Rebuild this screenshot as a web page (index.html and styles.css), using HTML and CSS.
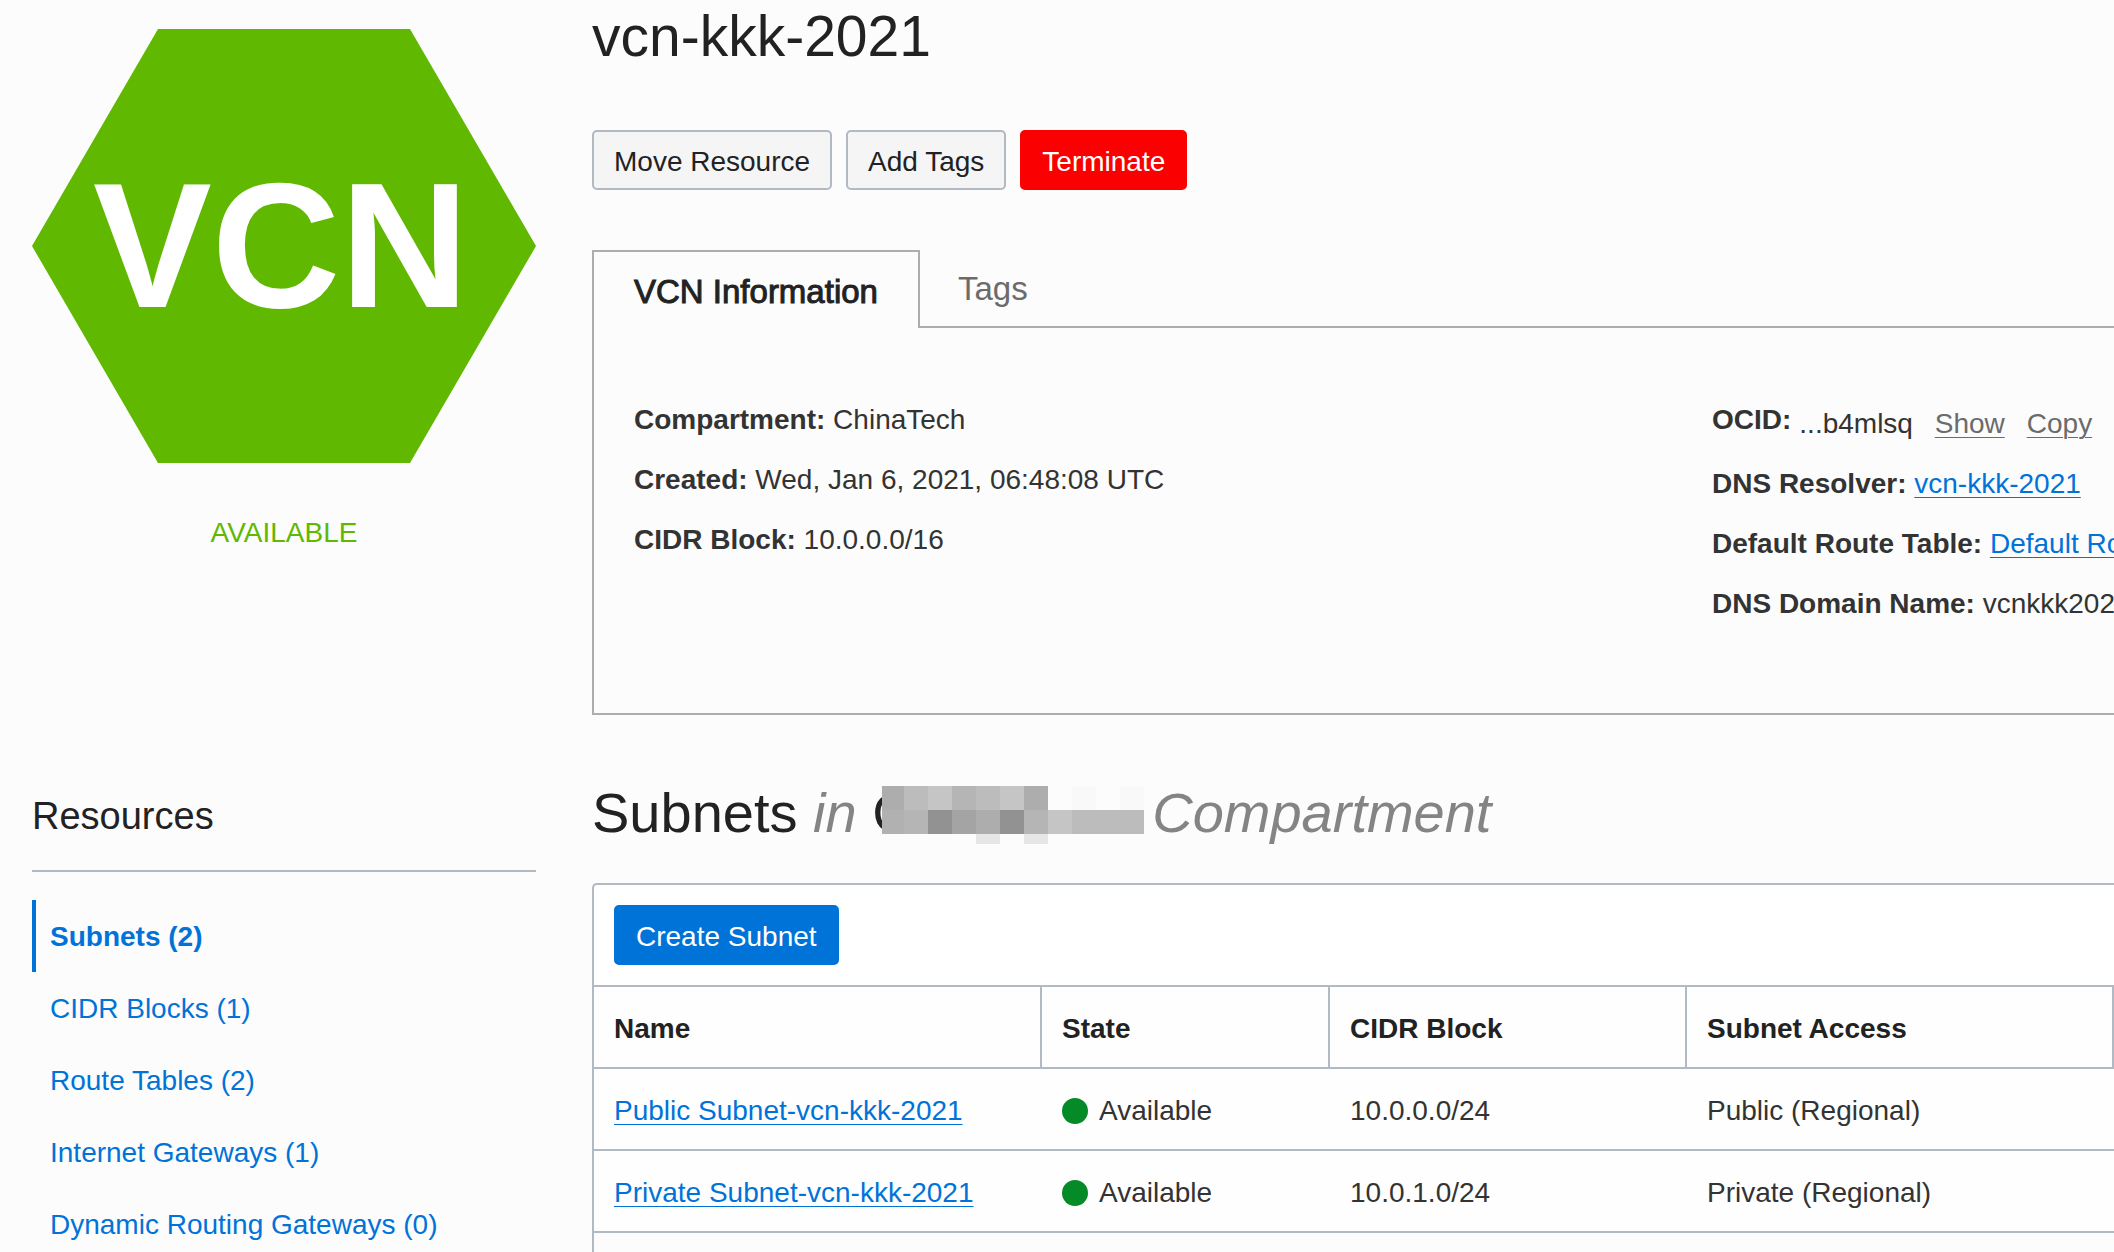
FILE: index.html
```html
<!DOCTYPE html>
<html lang="en">
<head>
<meta charset="utf-8">
<title>vcn-kkk-2021</title>
<link rel="stylesheet" href="styles.css">
</head>
<body>
<div class="page">
  <aside class="sidebar">
    <svg class="badge" viewBox="0 0 504 434" role="img" aria-label="VCN">
      <polygon points="126,0 378,0 504,217 378,434 126,434 0,217" fill="#60b800"/>
      <text class="badge-text" x="249" y="278" text-anchor="middle">VCN</text>
    </svg>
    <p class="status">AVAILABLE</p>
    <h2 class="side-title">Resources</h2>
    <nav class="side-nav">
      <a class="side-link current" href="#subnets">Subnets (2)</a>
      <a class="side-link" href="#cidr">CIDR Blocks (1)</a>
      <a class="side-link" href="#routes">Route Tables (2)</a>
      <a class="side-link" href="#internet">Internet Gateways (1)</a>
      <a class="side-link" href="#dynamic">Dynamic Routing Gateways (0)</a>
    </nav>
  </aside>

  <main class="main">
    <h1 class="title">vcn-kkk-2021</h1>
    <div class="actions">
      <button class="btn" type="button">Move Resource</button>
      <button class="btn" type="button">Add Tags</button>
      <button class="btn danger" type="button">Terminate</button>
    </div>

    <div class="tabs" role="tablist">
      <button class="tab active" type="button" role="tab" aria-selected="true">VCN Information</button>
      <button class="tab" type="button" role="tab" aria-selected="false">Tags</button>
    </div>
    <section class="info">
      <div class="info-col">
        <p class="row"><b>Compartment:</b> ChinaTech</p>
        <p class="row"><b>Created:</b> Wed, Jan 6, 2021, 06:48:08 UTC</p>
        <p class="row"><b>CIDR Block:</b> 10.0.0.0/16</p>
      </div>
      <div class="info-col">
        <p class="row ocid"><b>OCID:</b> <span class="ocid-value">...b4mlsq <a class="muted" href="#show">Show</a><a class="muted" href="#copy">Copy</a></span></p>
        <p class="row"><b>DNS Resolver:</b> <a class="link" href="#resolver">vcn-kkk-2021</a></p>
        <p class="row"><b>Default Route Table:</b> <a class="link" href="#table">Default Route Table for vcn-kkk-2021</a></p>
        <p class="row"><b>DNS Domain Name:</b> vcnkkk2021.oraclevcn.com</p>
      </div>
    </section>

    <h2 class="subtitle" id="subnets">Subnets <i>in</i> <span class="redacted">C<svg class="mosaic" viewBox="0 0 262 58" shape-rendering="crispEdges" aria-hidden="true">
      <path fill="#fcfcfc" d="M0 0h262v58H0z"/>
      <path fill="#adadad" d="M0 0h22v24H0zM142 0h24v24h-24zM94 24h24v24H94z"/>
      <path fill="#bcbcbc" d="M22 0h24v24H22zM94 0h24v24H94zM190 24h72v24h-72z"/>
      <path fill="#c5c5c5" d="M46 0h24v24H46zM118 0h24v24h-24zM166 24h24v24h-24z"/>
      <path fill="#b5b5b5" d="M70 0h24v24H70zM22 24h24v24H22zM142 24h24v24h-24z"/>
      <path fill="#b1b1b1" d="M0 24h22v24H0z"/>
      <path fill="#929292" d="M46 24h24v24H46zM118 24h24v24h-24z"/>
      <path fill="#a4a4a4" d="M70 24h24v24H70z"/>
      <path fill="#f9f9f9" d="M190 0h24v24h-24zM238 0h24v24h-24z"/>
      <path fill="#e6e6e6" d="M94 48h24v10H94zM142 48h24v10h-24z"/>
    </svg></span><i>Compartment</i></h2>

    <section class="panel">
      <div class="toolbar"><button class="btn primary" type="button">Create Subnet</button></div>
      <table class="table">
        <colgroup><col class="c-name"><col class="c-state"><col class="c-cidr"><col></colgroup>
        <thead>
          <tr><th>Name</th><th>State</th><th>CIDR Block</th><th>Subnet Access</th></tr>
        </thead>
        <tbody>
          <tr><td><a class="link" href="#public">Public Subnet-vcn-kkk-2021</a></td><td><span class="state">Available</span></td><td>10.0.0.0/24</td><td>Public (Regional)</td></tr>
          <tr><td><a class="link" href="#private">Private Subnet-vcn-kkk-2021</a></td><td><span class="state">Available</span></td><td>10.0.1.0/24</td><td>Private (Regional)</td></tr>
        </tbody>
      </table>
    </section>
  </main>
</div>
</body>
</html>
```
FILE: styles.css
```css
* { box-sizing: border-box; }

body {
  margin: 0;
  background: #fcfcfc;
  color: #333;
  font: 28px/60px "Liberation Sans", Arial, sans-serif;
}

h1, h2, p { margin: 0; font-weight: 400; }
button { font: inherit; color: inherit; cursor: pointer; }

.page {
  display: grid;
  grid-template-columns: 504px minmax(0, 1fr);
  column-gap: 56px;
  height: 100vh;
  padding-left: 32px;
  overflow: hidden;
}

/* Sidebar */
.sidebar { padding-top: 29px; }
.badge { display: block; width: 100%; }
.badge-text { font-size: 178px; font-weight: 700; fill: #fff; }
.status {
  margin-top: 50px;
  line-height: 40px;
  text-align: center;
  color: #60b800;
}
.side-title {
  margin-top: 239px;
  padding-bottom: 30px;
  border-bottom: 2px solid #b1b9c3;
  font-size: 38px;
  line-height: 48px;
  color: #222;
}
.side-nav { display: flex; flex-direction: column; margin-top: 28px; }
.side-link {
  padding: 2px 0 0 14px;
  border-left: 4px solid transparent;
  line-height: 70px;
  color: #0073d9;
  text-decoration: none;
}
.side-link.current { border-color: #0073d9; font-weight: 700; }

/* Heading and actions */
.main { display: flex; flex-direction: column; height: 100vh; }
.title, .subtitle {
  font-size: 56px;
  line-height: 72px;
  color: #222;
  white-space: nowrap;
}
.title { font-size: 57px; }
.actions { display: flex; gap: 14px; margin-top: 58px; }
.btn {
  height: 60px;
  padding: 4px 20px 0;
  border: 2px solid #b1b9c3;
  border-radius: 5px;
  background: #f5f5f5;
  color: #222;
  line-height: 52px;
}
.btn.danger { background: #fa0000; border-color: #fa0000; color: #fff; }
.btn.primary { background: #0073d9; border-color: #0073d9; color: #fff; }

/* Tabs */
.tabs { display: flex; margin-top: 60px; }
.tabs::after { content: ""; flex: 1; border-bottom: 2px solid #adadad; }
.tab {
  height: 78px;
  padding: 2px 38px 0;
  border: 0 solid #adadad;
  border-bottom-width: 2px;
  background: none;
  font-size: 33px;
  line-height: 74px;
  color: #6b6b6b;
}
.tab.active {
  padding: 4px 40px 0;
  border-width: 2px 2px 0;
  line-height: 72px;
  color: #222;
  -webkit-text-stroke: 1px #222;
}
.info {
  display: grid;
  grid-template-columns: minmax(0, 1078fr) minmax(0, 402fr);
  padding: 62px 0 79px 40px;
  border: solid #adadad;
  border-width: 0 0 2px 2px;
}
.row { white-space: nowrap; }
.ocid { display: flex; gap: 8px; height: 64px; }
.ocid-value { padding-top: 4px; }
.link { color: #0073d9; }
.muted { margin-left: 14px; color: #6b6b6b; }
.muted + .muted { margin-left: 22px; }
.link, .muted {
  text-decoration: underline 1px;
  text-underline-offset: 4px;
}

/* Subnets */
.subtitle { margin-top: 62px; }
.subtitle i { color: #848484; }
.redacted { position: relative; display: inline-block; width: 280px; }
.mosaic { position: absolute; left: 10px; top: 9px; width: 262px; height: 58px; }
.panel {
  flex: 1;
  margin-top: 34px;
  border: solid #b1b9c3;
  border-width: 2px 0 0 2px;
  border-top-left-radius: 5px;
}
.toolbar { display: flex; padding: 20px; background: #fff; border-top-left-radius: 5px; }
.table {
  width: 100%;
  table-layout: fixed;
  border-collapse: separate;
  border-spacing: 0;
  border-top: 2px solid #b1b9c3;
  background: #fefefe;
}
.c-name { width: 448px; }
.c-state { width: 288px; }
.c-cidr { width: 357px; }
.table th, .table td {
  height: 82px;
  padding: 4px 20px 0;
  border-bottom: 2px solid #b1b9c3;
  text-align: left;
  white-space: nowrap;
}
.table th { border-right: 2px solid #b1b9c3; color: #222; }
.state { display: flex; align-items: center; gap: 11px; }
.state::before {
  content: "";
  width: 26px;
  height: 26px;
  border-radius: 50%;
  background: #048a26;
}
```
